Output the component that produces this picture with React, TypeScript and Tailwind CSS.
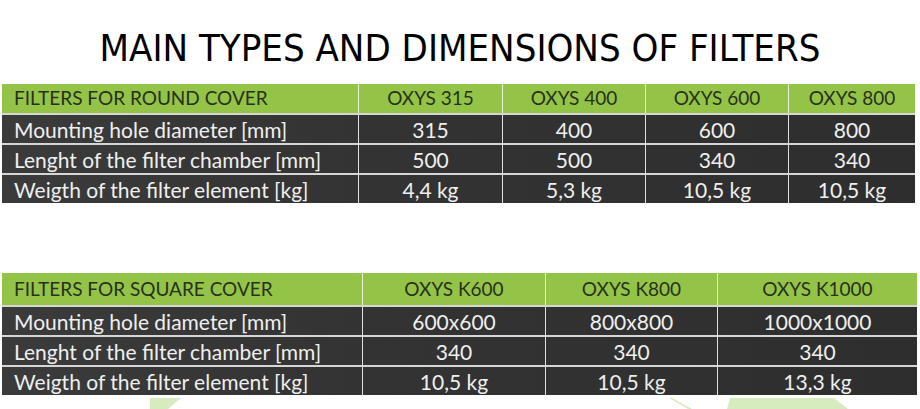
import React from "react";

const body = "'Lato', 'Open Sans', sans-serif";

type T = {
  cols: string;
  header: string[];
  rows: string[][];
};

const t1: T = {
  cols: "grid-cols-[356px_144px_143px_143px_127px]",
  header: ["FILTERS FOR ROUND COVER", "OXYS 315", "OXYS 400", "OXYS 600", "OXYS 800"],
  rows: [
    ["Mounting hole diameter [mm]", "315", "400", "600", "800"],
    ["Lenght of the filter chamber [mm]", "500", "500", "340", "340"],
    ["Weigth of the filter element [kg]", "4,4 kg", "5,3 kg", "10,5 kg", "10,5 kg"],
  ],
};

const t2: T = {
  cols: "grid-cols-[360px_183px_172px_200px]",
  header: ["FILTERS FOR SQUARE COVER", "OXYS K600", "OXYS K800", "OXYS K1000"],
  rows: [
    ["Mounting hole diameter [mm]", "600x600", "800x800", "1000x1000"],
    ["Lenght of the filter chamber [mm]", "340", "340", "340"],
    ["Weigth of the filter element [kg]", "10,5 kg", "10,5 kg", "13,3 kg"],
  ],
};

function Table({ t, w, headH }: { t: T; w: string; headH: string }) {
  return (
    <div className={`${w} ml-[2px]`} style={{ fontFamily: body }}>
      <div className={`grid ${t.cols} ${headH} bg-[#93c447] text-[#28311e] text-[19px]`}>
        {t.header.map((h, i) => (
          <div
            key={i}
            className={`flex items-center ${i === 0 ? "pl-[12px]" : "justify-center border-l border-[#e6f2d4]"}`}
          >
            {h}
          </div>
        ))}
      </div>
      {t.rows.map((r, ri) => (
        <div
          key={ri}
          className={`grid ${t.cols} h-[30px] bg-[linear-gradient(90deg,#3b3b3b,#333333_40%,#2e2e2e)] text-[#efefef] text-[21px] border-t-2 border-[#d6d6d6]`}
        >
          {r.map((c, i) => (
            <div
              key={i}
              className={`flex items-center leading-none ${i === 0 ? "pl-[12px]" : "justify-center border-l border-[#e0e0e0]"}`}
            >
              {c}
            </div>
          ))}
        </div>
      ))}
    </div>
  );
}

export default function App() {
  return (
    <div className="w-[920px] h-[409px] bg-white overflow-hidden relative">
      <div className="h-[84px] flex justify-center pt-[29px]">
        <h1
          className="text-[38px] leading-none text-black"
          style={{ fontFamily: "'DejaVu Sans Condensed', 'DejaVu Sans', sans-serif" }}
        >
          MAIN TYPES AND DIMENSIONS OF FILTERS
        </h1>
      </div>
      <Table t={t1} w="w-[913px]" headH="h-[29px]" />
      <div className="h-[70px]" />
      <Table t={t2} w="w-[915px]" headH="h-[32px]" />
      <svg className="absolute left-0 top-[398px]" width="920" height="11" viewBox="0 398 920 11">
        <polygon points="150,398 181,398 168,409 150,409" fill="#d6ecbf" />
        <polygon points="669,398 672,398 692,409 688,409" fill="#d6ecbf" />
        <polygon points="730,398 834,398 848,409 727,409" fill="#d6ecbf" />
      </svg>
    </div>
  );
}
